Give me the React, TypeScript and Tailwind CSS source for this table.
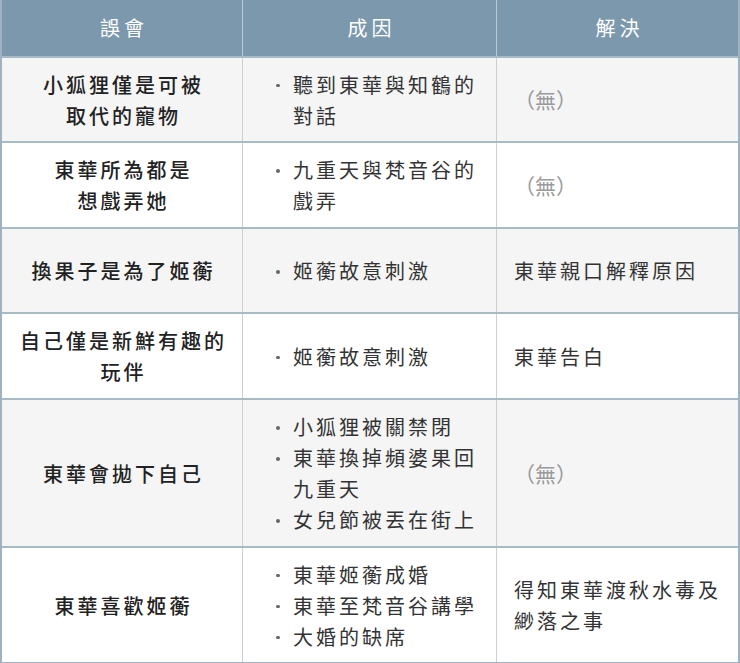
import React from "react";

type Row = {
  a: string[];
  b: string[][];
  c: string[] | null;
  h: number;
};

const rows: Row[] = [
  { a: ["小狐狸僅是可被", "取代的寵物"], b: [["聽到東華與知鶴的", "對話"]], c: null, h: 85 },
  { a: ["東華所為都是", "想戲弄她"], b: [["九重天與梵音谷的", "戲弄"]], c: null, h: 86 },
  { a: ["換果子是為了姬蘅"], b: [["姬蘅故意刺激"]], c: ["東華親口解釋原因"], h: 85 },
  { a: ["自己僅是新鮮有趣的", "玩伴"], b: [["姬蘅故意刺激"]], c: ["東華告白"], h: 86 },
  {
    a: ["東華會拋下自己"],
    b: [["小狐狸被關禁閉"], ["東華換掉頻婆果回", "九重天"], ["女兒節被丟在街上"]],
    c: null,
    h: 148,
  },
  {
    a: ["東華喜歡姬蘅"],
    b: [["東華姬蘅成婚"], ["東華至梵音谷講學"], ["大婚的缺席"]],
    c: ["得知東華渡秋水毒及", "緲落之事"],
    h: 116,
  },
];

export default function App() {
  return (
    <div
      className="w-[740px] h-[663px] bg-white text-[#333]"
      style={{ fontFamily: '"Noto Sans CJK TC", "Noto Sans", sans-serif' }}
    >
      <div className="border-x-2 border-b-2 border-[#9fb2c1]">
        <div className="grid grid-cols-[241px_254px_241px] h-[56px] bg-[#7b98ad] text-white text-[20px] tracking-[4px]">
          <div className="flex items-center justify-center border-r border-[#b9c9d5] pl-[4px]">誤會</div>
          <div className="flex items-center justify-center border-r border-[#b9c9d5] pl-[4px]">成因</div>
          <div className="flex items-center justify-center pl-[4px]">解決</div>
        </div>
        {rows.map((r, i) => (
          <div
            key={i}
            className={`grid grid-cols-[241px_254px_241px] border-t-2 border-[#a9bac7] text-[20px] leading-[31px] tracking-[3px] ${
              i % 2 === 0 ? "bg-[#f5f5f5]" : "bg-white"
            }`}
            style={{ height: r.h }}
          >
            <div className="flex flex-col items-center justify-center border-r border-[#c9d0d6] font-medium text-[#222] text-center pl-[3px]">
              {r.a.map((t, j) => (
                <div key={j}>{t}</div>
              ))}
            </div>
            <div className="flex flex-col justify-center border-r border-[#c9d0d6] pl-[31px]">
              {r.b.map((item, j) => (
                <div key={j} className="flex">
                  <div className="w-[19px] shrink-0 h-[31px] flex items-center">
                    <div className="w-[3.5px] h-[3.5px] rounded-full bg-[#666] ml-[2px] mt-[3px]" />
                  </div>
                  <div>
                    {item.map((t, k) => (
                      <div key={k}>{t}</div>
                    ))}
                  </div>
                </div>
              ))}
            </div>
            <div className="flex flex-col justify-center pl-[17px]">
              {r.c ? (
                r.c.map((t, j) => <div key={j}>{t}</div>)
              ) : (
                <div className="text-[#9a9a9a] text-[21px] tracking-[0px]">（無）</div>
              )}
            </div>
          </div>
        ))}
      </div>
    </div>
  );
}
